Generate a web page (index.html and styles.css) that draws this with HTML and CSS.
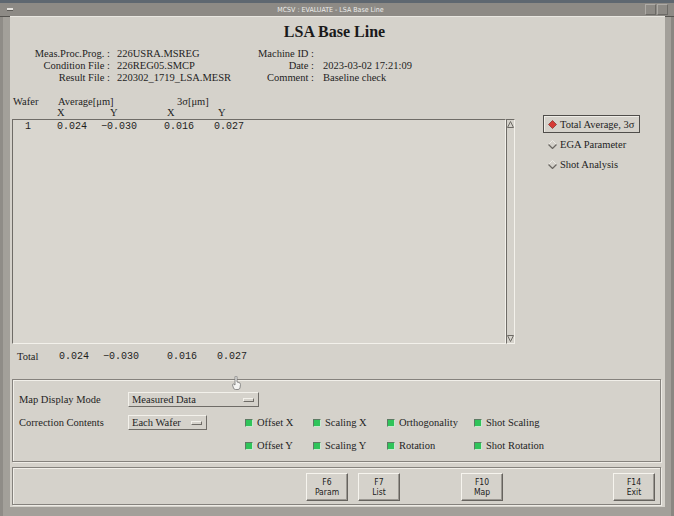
FILE: index.html
```html
<!DOCTYPE html>
<html>
<head>
    <title>LSA Base Line</title>
    <link rel="stylesheet" href="styles.css">
</head>
<body>
    <div class="screen">
        <div class="desk-edge"></div>

        <!-- window manager decoration -->
        <div class="titlebar">
            <span class="wm-btn wm-menu"><i></i></span>
            <span class="wm-title">MCSV : EVALUATE - LSA Base Line</span>
            <span class="wm-btn"></span>
            <span class="wm-btn"></span>
        </div>

        <div class="frame">
            <div class="panel">
                <h1 class="title">LSA Base Line</h1>

                <div class="info">
                    <div class="info-block left">
                        <span class="lbl">Meas.Proc.Prog. :</span><span>226USRA.MSREG</span>
                        <span class="lbl">Condition File :</span><span>226REG05.SMCP</span>
                        <span class="lbl">Result File :</span><span>220302_1719_LSA.MESR</span>
                    </div>
                    <div class="info-block right">
                        <span class="lbl">Machine ID :</span><span></span>
                        <span class="lbl">Date :</span><span>2023-03-02 17:21:09</span>
                        <span class="lbl">Comment :</span><span>Baseline check</span>
                    </div>
                </div>

                <div class="col-head">
                    <div class="col-head-row first">
                        <span class="w-wafer">Wafer</span>
                        <span class="w-avg">Average[μm]</span>
                        <span>3σ[μm]</span>
                    </div>
                    <div class="col-head-row second">
                        <span class="w-x1">X</span>
                        <span class="w-y1">Y</span>
                        <span class="w-x2">X</span>
                        <span>Y</span>
                    </div>
                </div>

                <div class="data">
                    <div class="listbox">
                        <div class="row">
                            <span class="idx">1</span>
                            <span>0.024</span>
                            <span>−0.030</span>
                            <span>0.016</span>
                            <span>0.027</span>
                        </div>
                    </div>
                    <div class="scrollbar">
                        <svg width="7" height="7" viewBox="0 0 7 7"><path d="M3.5 0.5 L6.5 6.5 L0.5 6.5 Z" fill="#d5d2cb" stroke="#6d6a65" stroke-width="1"/></svg>
                        <svg width="7" height="7" viewBox="0 0 7 7"><path d="M0.5 0.5 L6.5 0.5 L3.5 6.5 Z" fill="#d5d2cb" stroke="#6d6a65" stroke-width="1"/></svg>
                    </div>

                    <div class="radios">
                        <div class="radio on">
                            <svg width="9" height="9" viewBox="0 0 9 9"><path d="M4.5 0.5 L8.5 4.5 L4.5 8.5 L0.5 4.5 Z" fill="#d63b36" stroke="#8a3a36" stroke-width="0.8"/></svg>
                            <span>Total Average, 3σ</span>
                        </div>
                        <div class="radio">
                            <svg width="9" height="9" viewBox="0 0 9 9"><path d="M0.5 4.5 L4.5 0.5 L8.5 4.5" fill="none" stroke="#eeece6" stroke-width="1"/><path d="M0.5 4.5 L4.5 8.5 L8.5 4.5" fill="none" stroke="#6a6762" stroke-width="1.2"/></svg>
                            <span>EGA Parameter</span>
                        </div>
                        <div class="radio">
                            <svg width="9" height="9" viewBox="0 0 9 9"><path d="M0.5 4.5 L4.5 0.5 L8.5 4.5" fill="none" stroke="#eeece6" stroke-width="1"/><path d="M0.5 4.5 L4.5 8.5 L8.5 4.5" fill="none" stroke="#6a6762" stroke-width="1.2"/></svg>
                            <span>Shot Analysis</span>
                        </div>
                    </div>
                </div>

                <div class="total">
                    <span class="total-lbl">Total</span>
                    <span>0.024</span>
                    <span>−0.030</span>
                    <span>0.016</span>
                    <span>0.027</span>
                </div>

                <div class="group options">
                    <span class="opt-lbl r1">Map Display Mode</span>
                    <span class="optmenu wide r1">Measured Data<i></i></span>

                    <span class="opt-lbl r2">Correction Contents</span>
                    <span class="optmenu r2">Each Wafer<i></i></span>

                    <span class="chk r2 c3"><b></b>Offset X</span>
                    <span class="chk r2 c4"><b></b>Scaling X</span>
                    <span class="chk r2 c5"><b></b>Orthogonality</span>
                    <span class="chk r2 c6"><b></b>Shot Scaling</span>

                    <span class="chk r3 c3"><b></b>Offset Y</span>
                    <span class="chk r3 c4"><b></b>Scaling Y</span>
                    <span class="chk r3 c5"><b></b>Rotation</span>
                    <span class="chk r3 c6"><b></b>Shot Rotation</span>
                </div>

                <div class="group fkeys">
                    <div class="fkey k6">F6<br>Param</div>
                    <div class="fkey k7">F7<br>List</div>
                    <div class="fkey k10">F10<br>Map</div>
                    <div class="fkey k14">F14<br>Exit</div>
                </div>
            </div>
        </div>

        <!-- pointer -->
        <svg class="cursor" width="9" height="14" viewBox="0 0 9 14">
            <path d="M3 1 Q3 0 4 0 Q5 0 5 1 L5 6 L7 6.5 Q8.5 7 8.5 8.5 L8 12 Q7.5 13.5 6 13.5 L3.5 13.5 Q2 13.5 1.5 12 L0.5 9 Q0.5 8 1.5 8 L3 9 Z" fill="#f4f4f2" stroke="#777" stroke-width="0.8"/>
        </svg>
    </div>
</body>
</html>
```

FILE: styles.css
```css
body {
    margin: 0;
    background: #8b8884;
    font-family: "Liberation Serif", serif;
    color: #1e1e1e;
}

.screen {
    width: 674px;
    height: 516px;
    position: relative;
    overflow: hidden;
    display: flex;
    flex-direction: column;
    background: #9d9a94;
}

.desk-edge {
    height: 3px;
    background: #5e6770;
}

/* window title bar */
.titlebar {
    height: 13px;
    background: #8d8a85;
    border-bottom: 1px solid #55534f;
    display: flex;
    align-items: center;
    padding: 0 6px 0 4px;
}

.wm-title {
    flex: 1;
    text-align: center;
    font-family: "DejaVu Sans Condensed", "DejaVu Sans", sans-serif;
    font-stretch: condensed;
    font-size: 7px;
    color: #ececea;
    padding-left: 2px;
}

.wm-btn {
    width: 9px;
    height: 9px;
    border: 1px solid;
    border-color: #aeaba6 #6c6a66 #6c6a66 #aeaba6;
    margin-left: 1px;
}

.wm-menu {
    display: flex;
    align-items: center;
    justify-content: center;
    margin-left: 0;
    border-color: #8d8a85;
}

.wm-menu i {
    width: 6px;
    height: 2px;
    background: #e6e4e0;
    border-bottom: 1px solid #5d5b57;
}

.frame {
    flex: 1;
    display: flex;
    padding: 0 9px 9px 10px;
    background: #a3a09a;
    box-shadow: inset 3px 0 0 #8f8c87, inset -3px 0 0 #8a8782;
}

.panel {
    flex: 1;
    display: flex;
    flex-direction: column;
    background: #d5d2cb;
    border-top: 1px solid #e9e7e1;
    margin-top: -1px;
}

.title {
    margin: 0;
    padding: 6px 6px 0 0;
    font-size: 16px;
    line-height: 18px;
    font-weight: bold;
    text-align: center;
    color: #1a1a1a;
}

/* header info */
.info {
    display: flex;
    margin-top: 7px;
    font-size: 10.5px;
    line-height: 12px;
}

.info-block {
    display: grid;
    grid-template-columns: 100px auto;
    column-gap: 7px;
    white-space: nowrap;
}

.info-block.left {
    width: 244px;
}

.info-block.right {
    grid-template-columns: 60px auto;
    column-gap: 9px;
}

.lbl {
    text-align: right;
}

/* column headings */
.col-head {
    margin-top: 12px;
    font-size: 10.5px;
    line-height: 11px;
}

.col-head-row {
    display: flex;
}

.col-head-row.first {
    padding-left: 3px;
}

.col-head-row.second {
    padding-left: 47px;
}

.w-wafer { width: 45px; }
.w-avg { width: 119px; }
.w-x1 { width: 53px; }
.w-y1 { width: 57px; }
.w-x2 { width: 51px; }

/* list + radio area */
.data {
    display: flex;
    margin-top: 1px;
}

.listbox {
    margin-left: 2px;
    width: 494px;
    height: 225px;
    box-sizing: border-box;
    border: 1px solid;
    border-color: #6f6c67 #f3f1eb #f3f1eb #6f6c67;
    background: #d9d6cf;
    padding-top: 1px;
}

.row {
    display: grid;
    grid-template-columns: 41px 33px 50px 57px 50px;
    font-family: "Liberation Mono", monospace;
    font-size: 10px;
    line-height: 12px;
    text-align: right;
}

.row .idx {
    text-align: left;
    padding-left: 12px;
}

.scrollbar {
    width: 9px;
    height: 225px;
    box-sizing: border-box;
    border: 1px solid;
    border-color: #6f6c67 #f3f1eb #f3f1eb #6f6c67;
    display: flex;
    flex-direction: column;
    justify-content: space-between;
    align-items: center;
    padding: 1px 0;
}

.radios {
    margin-left: 28px;
    margin-top: -4px;
    display: flex;
    flex-direction: column;
    gap: 2px;
    font-size: 10.5px;
}

.radio {
    display: flex;
    align-items: center;
    gap: 3px;
    height: 18px;
    box-sizing: border-box;
    padding-left: 4px;
    border: 1px solid transparent;
    white-space: nowrap;
}

.radio.on {
    width: 97px;
    border-color: #4f4d4a;
    box-shadow: inset 1px 1px 0 #eeece6;
}

/* totals */
.total {
    display: grid;
    grid-template-columns: 40px 32px 50px 58px 50px;
    padding-left: 7px;
    margin-top: 7px;
    line-height: 12px;
    font-family: "Liberation Mono", monospace;
    font-size: 10px;
    text-align: right;
}

.total .total-lbl {
    text-align: left;
    font-family: "Liberation Serif", serif;
    font-size: 10.5px;
}

/* etched groups */
.group {
    margin-left: 2px;
    width: 649px;
    box-sizing: border-box;
    border: 1px solid #85827d;
    box-shadow: inset 1px 1px 0 #f1efe9, 1px 1px 0 #eeece6;
}

.options {
    margin-top: 16px;
    padding: 12px 0 8px 6px;
    display: grid;
    grid-template-columns: 109px 117px 68px 74px 87px 1fr;
    grid-template-rows: 15px 15px 15px;
    row-gap: 8px;
    font-size: 10.5px;
    white-space: nowrap;
}

.opt-lbl {
    display: flex;
    align-items: center;
}

.r1 { grid-row: 1; }
.r2 { grid-row: 2; }
.r3 { grid-row: 3; }
.c3 { grid-column: 3; }
.c4 { grid-column: 4; }
.c5 { grid-column: 5; }
.c6 { grid-column: 6; }

.optmenu {
    display: flex;
    align-items: center;
    justify-content: space-between;
    width: 79px;
    box-sizing: border-box;
    border: 1px solid;
    border-color: #f3f1eb #6f6c67 #6f6c67 #f3f1eb;
    padding: 0 4px 0 3px;
}

.optmenu.wide {
    grid-column: 2 / 5;
    width: 131px;
}

.optmenu i {
    width: 9px;
    height: 2px;
    border: 1px solid;
    border-color: #f3f1eb #6f6c67 #6f6c67 #f3f1eb;
}

.chk {
    display: flex;
    align-items: center;
    gap: 4px;
}

.chk b {
    width: 6px;
    height: 6px;
    background: #2fc45a;
    border: 1px solid;
    border-color: #5d7a63 #c9e8cf #c9e8cf #5d7a63;
}

/* function keys */
.fkeys {
    margin-top: 5px;
    height: 38px;
    padding-top: 5px;
    display: flex;
    align-items: flex-start;
}

.fkey {
    width: 42px;
    height: 28px;
    box-sizing: border-box;
    border: 1px solid;
    border-color: #f6f4ee #66635e #66635e #f6f4ee;
    box-shadow: inset -1px -1px 0 #9b9892;
    display: flex;
    align-items: center;
    justify-content: center;
    text-align: center;
    font-family: "DejaVu Sans Condensed", "DejaVu Sans", sans-serif;
    font-stretch: condensed;
    font-size: 8.5px;
    line-height: 10px;
    color: #1c1c1c;
}

.k6 { margin-left: 293px; }
.k7 { margin-left: 10px; }
.k10 { margin-left: 61px; }
.k14 { margin-left: 110px; }

.cursor {
    position: absolute;
    left: 232px;
    top: 376px;
}
```
